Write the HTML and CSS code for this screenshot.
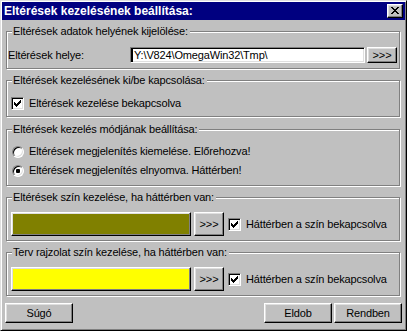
FILE: index.html
```html
<!DOCTYPE html>
<html>
<head>
<meta charset="utf-8">
<link rel="stylesheet" href="styles.css">
</head>
<body>
<div class="window">
  <div class="titlebar">
    <span class="title">Eltérések kezelésének beállítása:</span>
    <span class="close"><svg width="8" height="7" viewBox="0 0 8 7"><path d="M0 0h2v1H0z M6 0h2v1H6z M1 1h2v1H1z M5 1h2v1H5z M2 2h4v1H2z M3 3h2v1H3z M2 4h4v1H2z M1 5h2v1H1z M5 5h2v1H5z M0 6h2v1H0z M6 6h2v1H6z" fill="#000"/></svg></span>
  </div>
  <div class="content">
    <div class="group g1">
      <div class="legend">Eltérések adatok helyének kijelölése:</div>
      <div class="path-row">
        <span class="field-label">Eltérések helye:</span>
        <div class="input"><span class="caret"></span>Y:\V824\OmegaWin32\Tmp\</div>
        <div class="btn more">&gt;&gt;&gt;</div>
      </div>
    </div>
    <div class="group g2">
      <div class="legend">Eltérések kezelésének ki/be kapcsolása:</div>
      <div class="opt-row">
        <span class="check"><svg width="11" height="11" viewBox="0 0 11 11"><path d="M2 4h1v3H2z M3 5h1v3H3z M4 6h1v3H4z M5 5h1v3H5z M6 4h1v3H6z M7 3h1v3H7z M8 2h1v3H8z" fill="#000"/></svg></span>
        <span class="opt-text">Eltérések kezelése bekapcsolva</span>
      </div>
    </div>
    <div class="group g3">
      <div class="legend">Eltérések kezelés módjának beállítása:</div>
      <div class="opt-row radio-row">
        <span class="radio"></span>
        <span class="opt-text">Eltérések megjelenítés kiemelése. Előrehozva!</span>
      </div>
      <div class="opt-row radio-row second">
        <span class="radio"><span class="dot"></span></span>
        <span class="opt-text">Eltérések megjelenítés elnyomva. Háttérben!</span>
      </div>
    </div>
    <div class="group g4">
      <div class="legend">Eltérések szín kezelése, ha háttérben van:</div>
      <div class="color-row">
        <div class="swatch olive"></div>
        <div class="btn more tall">&gt;&gt;&gt;</div>
        <span class="check"><svg width="11" height="11" viewBox="0 0 11 11"><path d="M2 4h1v3H2z M3 5h1v3H3z M4 6h1v3H4z M5 5h1v3H5z M6 4h1v3H6z M7 3h1v3H7z M8 2h1v3H8z" fill="#000"/></svg></span>
        <span class="opt-text">Háttérben a szín bekapcsolva</span>
      </div>
    </div>
    <div class="group g5">
      <div class="legend">Terv rajzolat szín kezelése, ha háttérben van:</div>
      <div class="color-row">
        <div class="swatch yellow"></div>
        <div class="btn more tall">&gt;&gt;&gt;</div>
        <span class="check"><svg width="11" height="11" viewBox="0 0 11 11"><path d="M2 4h1v3H2z M3 5h1v3H3z M4 6h1v3H4z M5 5h1v3H5z M6 4h1v3H6z M7 3h1v3H7z M8 2h1v3H8z" fill="#000"/></svg></span>
        <span class="opt-text">Háttérben a szín bekapcsolva</span>
      </div>
    </div>
  </div>
  <div class="footer">
    <div class="btn action">Súgó</div>
    <div class="spacer"></div>
    <div class="btn action">Eldob</div>
    <div class="btn action">Rendben</div>
  </div>
</div>
</body>
</html>
```
FILE: styles.css
```css
* { box-sizing: border-box; }

body {
  margin: 0;
  background: #c0c0c0;
  font-family: "Liberation Sans", Arial, sans-serif;
  font-size: 11px;
  letter-spacing: -0.15px;
  line-height: 13px;
  color: #000;
}

.window {
  width: 407px;
  height: 331px;
  background: #c0c0c0;
  border: 1px solid;
  border-color: #dfdfdf #000 #000 #dfdfdf;
  box-shadow: inset 1px 1px #fff, inset -1px -1px #808080;
  padding: 1px;
  display: flex;
  flex-direction: column;
}

.titlebar {
  height: 18px;
  flex: 0 0 18px;
  background: #000080;
  display: flex;
  align-items: center;
  justify-content: space-between;
  padding: 0 2px 0 2px;
}

.title {
  color: #fff;
  font-weight: bold;
  font-size: 12px;
  letter-spacing: 0;
  line-height: 18px;
}

.close {
  width: 16px;
  height: 14px;
  background: #c0c0c0;
  border: 1px solid;
  border-color: #fff #000 #000 #fff;
  box-shadow: inset -1px -1px #808080, inset 1px 1px #dfdfdf;
  display: flex;
  align-items: center;
  justify-content: center;
  padding-bottom: 1px;
}
.close svg { display: block; }

.content {
  padding: 0 5px 0 4px;
}

.group {
  border: 1px solid #808080;
  box-shadow: inset 1px 1px #fff, 1px 1px #fff;
  padding: 0 0 0 4px;
}

.legend {
  width: fit-content;
  margin-top: -7px;
  margin-left: 1px;
  padding: 0 2px 0 1px;
  background: #c0c0c0;
  line-height: 13px;
  white-space: nowrap;
}

.g1 { margin-top: 11px; padding-bottom: 5px; }
.g2 { margin-top: 11px; padding-bottom: 6px; }
.g3 { margin-top: 12px; padding-bottom: 8px; }
.g4 { margin-top: 11px; padding-bottom: 4px; }
.g5 { margin-top: 11px; padding-bottom: 4px; }

.path-row {
  display: flex;
  align-items: center;
  height: 16px;
  margin-top: 9px;
  margin-left: -3px;
}

.field-label {
  flex: 0 0 122px;
}

.input {
  flex: 0 0 235px;
  height: 16px;
  background: #fff;
  border: 1px solid;
  border-color: #808080 #fff #fff #808080;
  box-shadow: inset 1px 1px #000, inset -1px -1px #dfdfdf;
  padding-left: 1px;
  display: flex;
  align-items: center;
  white-space: nowrap;
}

.caret {
  width: 1px;
  height: 13px;
  background: #000;
  margin-right: 1px;
}

.btn {
  background: #c0c0c0;
  border: 1px solid;
  border-color: #fff #000 #000 #fff;
  box-shadow: inset -1px -1px #808080, inset 1px 1px #dfdfdf;
  display: flex;
  align-items: center;
  justify-content: center;
  white-space: nowrap;
}

.more {
  flex: 0 0 30px;
  height: 16px;
  margin-left: 2px;
}

.more.tall {
  height: 24px;
  margin-left: 3px;
}

.opt-row {
  display: flex;
  align-items: center;
  height: 13px;
  margin-top: 10px;
  gap: 5px;
}

.radio-row {
  margin-top: 9px;
  padding-left: 1px;
}
.radio-row.second { margin-top: 6px; }

.check {
  flex: 0 0 13px;
  width: 13px;
  height: 13px;
  background: #fff;
  border: 1px solid;
  border-color: #808080 #fff #fff #808080;
  box-shadow: inset 1px 1px #000, inset -1px -1px #dfdfdf;
}
.check svg { display: block; }

.radio {
  flex: 0 0 12px;
  width: 12px;
  height: 12px;
  border-radius: 50%;
  background: #fff;
  border: 1px solid;
  border-color: #808080 #fff #fff #808080;
  box-shadow: inset 1px 1px #000, inset -1px -1px #dfdfdf;
  display: flex;
  align-items: center;
  justify-content: center;
}

.dot {
  width: 4px;
  height: 4px;
  border-radius: 1px;
  background: #000;
}

.color-row {
  display: flex;
  align-items: center;
  height: 24px;
  margin-top: 8px;
}

.swatch {
  flex: 0 0 180px;
  height: 24px;
  border: 1px solid;
  border-color: #fff #000 #000 #fff;
  box-shadow: inset -1px -1px #808080, inset 1px 1px #dfdfdf;
}
.swatch.olive { background: #808000; }
.swatch.yellow { background: #ffff00; }

.color-row .check { margin-left: 4px; }
.color-row .opt-text { margin-left: 5px; }

.footer {
  display: flex;
  margin-top: 7px;
  padding: 0 3px;
  gap: 2px;
}

.spacer { flex: 1; }

.action {
  width: 68px;
  height: 20px;
}
```
